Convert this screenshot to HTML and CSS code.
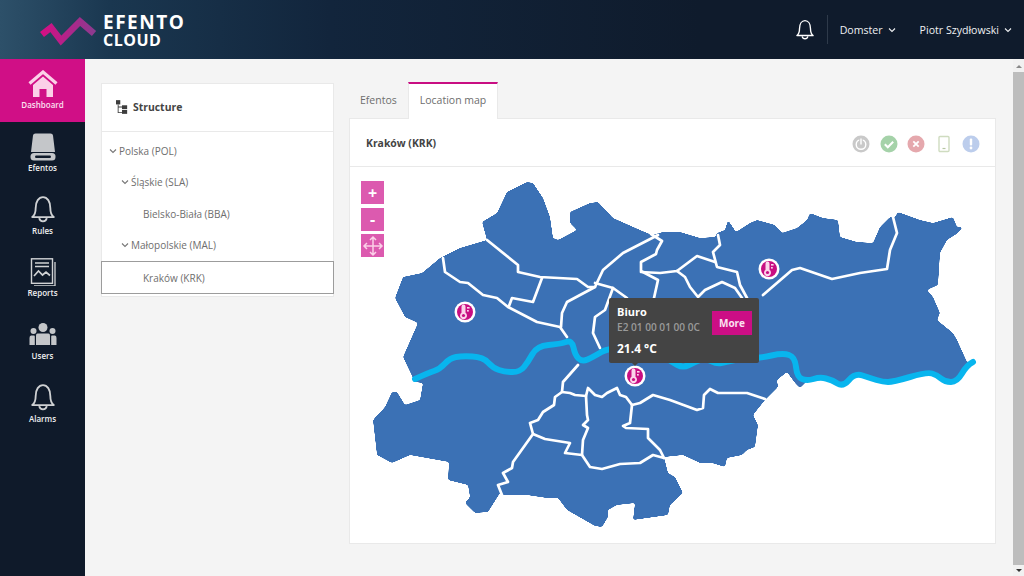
FILE: index.html
```html
<!DOCTYPE html>
<html lang="en">
<head>
<meta charset="utf-8">
<title>Efento Cloud</title>
<link rel="stylesheet" href="styles.css">
</head>
<body>
<svg class="defs" width="0" height="0">
  <defs>
    <filter id="soft" color-interpolation-filters="sRGB">
      <feGaussianBlur stdDeviation="1"/>
      <feColorMatrix values="1 0 0 0 0 0 1 0 0 0 0 0 1 0 0 0 0 0 10 -4.5"/>
    </filter>
  </defs>
  <symbol id="bell" viewBox="0 0 24 26">
    <path d="M2 20.500c2.600-2 3.200-4 3.200-8.500C5.200 6 8 2 12 2s6.800 4 6.800 10c0 4.500.6 6.500 3.200 8.500z" fill="none" stroke="currentColor" stroke-width="1.700" stroke-linejoin="round"/>
    <path d="M8.500 21.500c.4 2 1.800 3 3.500 3s3.100-1 3.500-3" fill="none" stroke="currentColor" stroke-width="1.700"/>
  </symbol>
  <symbol id="chev" viewBox="0 0 8 6">
    <path d="M1 1.500l3 3 3-3" fill="none" stroke="currentColor" stroke-width="1.100"/>
  </symbol>
  <symbol id="pin" viewBox="0 0 22 22">
    <circle cx="11" cy="11" r="10.500" fill="#fff"/>
    <circle cx="11" cy="11" r="8" fill="#c80e82"/>
    <path d="M7.500 5.500a2 2 0 0 1 4 0v6.300a3.500 3.500 0 1 1-4 0z" fill="#fbd4ea"/>
    <circle cx="9.500" cy="14.500" r="1.600" fill="#c80e82"/>
    <rect x="13" y="6" width="2.600" height="1.600" fill="#fbd4ea"/>
    <rect x="13" y="9" width="1.800" height="1.600" fill="#fbd4ea"/>
  </symbol>
</svg>

<header class="topbar">
  <div class="brand">
    <svg class="brand-mark" viewBox="0 0 60 30" width="60" height="30">
      <defs><linearGradient id="lg"><stop offset="0" stop-color="#d40f84"/><stop offset="1" stop-color="#8d3a8f"/></linearGradient></defs>
      <path d="M4 17.500l9-7 10 13 19-19 14 12" fill="none" stroke="url(#lg)" stroke-width="6.500" stroke-linejoin="miter"/>
    </svg>
    <div class="brand-text"><span class="brand-top">EFENTO</span><span class="brand-bottom">CLOUD</span></div>
  </div>
  <div class="top-actions">
    <svg class="top-bell" width="20" height="21"><use href="#bell"/></svg>
    <span class="top-divider"></span>
    <span class="top-menu first">Domster <svg class="chev" width="8" height="6"><use href="#chev"/></svg></span>
    <span class="top-menu">Piotr Szydłowski <svg class="chev" width="8" height="6"><use href="#chev"/></svg></span>
  </div>
</header>

<div class="main">
  <nav class="sidebar">
    <a class="nav-item active">
      <svg class="nav-icon" viewBox="0 0 30 28" width="30" height="28">
        <path d="M1.500 13.500L15 2l13.500 11.500" fill="none" stroke="#fbd0e8" stroke-width="3.200"/>
        <path d="M5 15L15 6.500 25 15v12h-6.500v-8h-7v8H5z" fill="#fbd0e8"/>
      </svg>
      <span>Dashboard</span>
    </a>
    <a class="nav-item">
      <svg class="nav-icon" viewBox="0 0 30 28" width="30" height="28">
        <path d="M5 2.500q.2-2 2.500-2h15q2.300 0 2.500 2L27 19H3z" fill="#c4c6c9"/>
        <rect x="2.500" y="20" width="25" height="7.500" rx="3.500" fill="#c4c6c9"/>
        <rect x="7" y="22.500" width="16" height="2.400" rx="1.200" fill="#0f1a2a"/>
      </svg>
      <span>Efentos</span>
    </a>
    <a class="nav-item">
      <svg class="nav-icon nav-line" width="28" height="28"><use href="#bell"/></svg>
      <span>Rules</span>
    </a>
    <a class="nav-item">
      <svg class="nav-icon" viewBox="0 0 30 28" width="30" height="28" fill="none" stroke="#d0d2d4">
        <path d="M27 4v24H6" stroke-width="1.300"/>
        <rect x="3.500" y=".8" width="21" height="24.500" stroke-width="1.400"/>
        <path d="M7 5h14M7 8.500h14" stroke-width="1.300"/>
        <path d="M6 18l4.500-5 4 4 3.500-3 4 3.500" stroke-width="1.700"/>
      </svg>
      <span>Reports</span>
    </a>
    <a class="nav-item">
      <svg class="nav-icon" viewBox="0 0 30 28" width="30" height="28" fill="#c4c6c9">
        <circle cx="15" cy="6.500" r="4.500"/>
        <circle cx="5.500" cy="10" r="3"/>
        <circle cx="24.500" cy="10" r="3"/>
        <path d="M9.500 12.500h11q1.500 0 1.500 2V24H8v-9.500q0-2 1.500-2z"/>
        <path d="M3 14.500h3q.8 0 .8 1V24H1.500v-7q0-2.500 1.500-2.500zM27 14.500h-3q-.8 0-.8 1V24h5.300v-7q0-2.500-1.500-2.500z"/>
      </svg>
      <span>Users</span>
    </a>
    <a class="nav-item">
      <svg class="nav-icon nav-line" width="28" height="28"><use href="#bell"/></svg>
      <span>Alarms</span>
    </a>
  </nav>

  <main class="content">
    <section class="card structure">
      <div class="card-head structure-head">
        <svg class="tree-icon" viewBox="0 0 14 18" width="12" height="16" fill="#3d3d3d">
          <rect x="0" y="1" width="5" height="5"/>
          <rect x="7" y="7" width="6" height="4.500"/>
          <rect x="7" y="12.500" width="6" height="4.500"/>
          <path d="M2 6h1v9h4v1H2zM3 8.500h4v1H3z"/>
        </svg>
        <h2>Structure</h2>
      </div>
      <ul class="tree">
        <li class="row lvl0"><svg class="chev" width="8" height="6"><use href="#chev"/></svg>Polska (POL)</li>
        <li class="row lvl1"><svg class="chev" width="8" height="6"><use href="#chev"/></svg>Śląskie (SLA)</li>
        <li class="row lvl2">Bielsko-Biała (BBA)</li>
        <li class="row lvl1"><svg class="chev" width="8" height="6"><use href="#chev"/></svg>Małopolskie (MAL)</li>
        <li class="row lvl2 selected">Kraków (KRK)</li>
      </ul>
    </section>

    <section class="right">
      <div class="tabs">
        <a class="tab">Efentos</a>
        <a class="tab tab-active">Location map</a>
      </div>
      <div class="card map-card">
        <div class="card-head map-head">
          <h2>Kraków (KRK)</h2>
          <div class="status">
            <svg width="18" height="18" viewBox="0 0 18 18">
              <circle cx="9" cy="9" r="8.500" fill="#c9c9c9"/>
              <circle cx="9" cy="9.500" r="4.800" fill="none" stroke="#fff" stroke-width="1.400"/>
              <path d="M9 3.500v6" stroke="#c9c9c9" stroke-width="3.500"/>
              <path d="M9 3.500v6" stroke="#fff" stroke-width="1.400"/>
            </svg>
            <svg width="18" height="18" viewBox="0 0 18 18">
              <circle cx="9" cy="9" r="8.500" fill="#a5d2a9"/>
              <path d="M4.800 9.300l3 3 5.400-5.600" fill="none" stroke="#fff" stroke-width="2"/>
            </svg>
            <svg width="18" height="18" viewBox="0 0 18 18">
              <circle cx="9" cy="9" r="8.500" fill="#e5a8ad"/>
              <path d="M6.300 6.300l5.400 5.400M11.700 6.300l-5.400 5.400" fill="none" stroke="#fff" stroke-width="1.800"/>
            </svg>
            <svg width="18" height="18" viewBox="0 0 18 18">
              <rect x="4" y="1.500" width="10" height="15" rx="1" fill="none" stroke="#cfdcc0" stroke-width="1.400"/>
              <path d="M7.500 13.500h3" stroke="#b7c6a3" stroke-width="1.200"/>
            </svg>
            <svg width="18" height="18" viewBox="0 0 18 18">
              <circle cx="9" cy="9" r="8.500" fill="#bccdec"/>
              <rect x="7.800" y="3.500" width="2.400" height="7" rx="1" fill="#fff"/>
              <circle cx="9" cy="13" r="1.400" fill="#fff"/>
            </svg>
          </div>
        </div>
        <div class="map">
          <svg class="map-svg" viewBox="350 167 645 376" width="645" height="376">
            <path class="land" d="M482 222L497 213 507 192 527 182 533 183 543 198 550 217 553 238 558 240 577 230 570 223 570 212 590 203 598 202 613 218 640 230 652 235 663 232 680 232 700 238 715 237 717 233 725 230 728 220 736 232 750 223 757 220 775 225 782 233 797 228 807 220 810 213 823 218 838 220 840 237 857 242 873 243 880 227 890 217 895 217 898 212 920 220 933 223 953 217 957 227 963 227 958 233 947 240 940 253 938 285 927 290 933 297 940 313 937 320 953 333 957 340 967 362 975 362 967 365 957 382 945 382 937 375 927 372 893 382 883 382 870 378 855 373 843 387 832 380 820 377 807 381 800 388 795 383 787 372 777 380 778 387 765 400 753 415 758 425 755 447 747 450 742 455 727 458 725 467 712 463 700 463 683 455 664 457 668 473 675 477 683 493 670 505 668 515 633 520 635 503 617 505 608 510 608 517 602 527 595 526 567 510 558 498 547 498 527 495 503 495 500 493 488 512 475 513 465 503 470 497 468 485 448 480 449 462 410 455 392 463 377 455 373 420 385 407 392 392 397 392 405 405 420 400 423 383 415 382 403 357 418 323 405 317 395 298 403 277 422 273 440 258 460 248 487 240z"/>
            <path class="border" d="M443 258L445 272 460 282 468 283 483 295 497 298 508 307 537 322 560 327 567 337"/>
            <path class="border" d="M487 240L518 265 518 272 540 277 577 279 588 287 595 287"/>
            <path class="border" d="M542 278L533 302 512 298 509 306"/>
            <path class="border" d="M658 235L623 253 603 270 595 287 567 302 562 313 561 327"/>
            <path class="border" d="M595 283L613 288 627 298"/>
            <path class="border" d="M613 288L605 310 595 317 593 333 600 348"/>
            <path class="border" d="M651 234L662 241 657 250 656 254 641 262 641 271 658 280 654 298"/>
            <path class="border" d="M641 272L660 273 677 271 697 256 715 262"/>
            <path class="border" d="M677 271L685 277 690 287 698 297 705 290 722 282 735 288 742 298"/>
            <path class="border" d="M718 235L720 245 713 252 717 267 737 272 740 285 747 298"/>
            <path class="border" d="M763 295L792 270 800 268 832 279 860 273 887 269 890 250 897 233 893 217"/>
            <path class="border" d="M578 365L563 382 562 392 570 393 575 395 586 396 588 388 595 395 602 397 607 393 617 388 620 395 626 397 632 405 640 403 653 395 670 400 697 410 703 408 704 395 710 389 718 393 747 393 765 399"/>
            <path class="border" d="M586 396L587 415 588 420 583 425 588 428 583 440 582 455"/>
            <path class="border" d="M562 392L555 397 554 405 543 412 538 420 530 423 533 434 513 462 512 468 503 473 508 482 498 485 502 495"/>
            <path class="border" d="M533 434L545 439 570 443 565 453 582 455 590 467 602 469 620 464 640 463 653 455 664 458"/>
            <path class="border" d="M632 405L630 423 623 426 626 428 648 429 648 438 660 450 664 458"/>
            <path class="river" d="M415 379Q428 373 434 371Q440 369 445 363.500Q450 358 456 357Q462 356 472.500 356.500Q483 357 488 362.500Q493 368 499 370Q505 372 512.500 372Q520 372 524 367Q528 362 532.500 354Q537 346 548.500 345Q560 344 566 342Q572 340 573.500 347.500Q575 355 578.500 358.500Q582 362 587.500 359.500Q593 357 601.500 352Q610 347 625 349.500Q640 352 650 353Q660 354 666 358Q672 362 677.500 365Q683 368 689 365Q695 362 700 360Q705 358 711 361Q717 364 721 363Q725 362 735 360Q745 358 752.500 358Q760 358 771.500 355.500Q783 353 789 355Q795 357 796 367Q797 377 802 379Q807 381 813.500 379Q820 377 826 378.500Q832 380 837.500 383.500Q843 387 849 380Q855 373 862.500 375.500Q870 378 876.500 380Q883 382 888 382Q893 382 910 377Q927 372 932 373.500Q937 375 941 378.500Q945 382 951 382Q957 382 962 373.500Q967 365 973 362"/>
            <use href="#pin" x="454" y="301" width="22" height="22"/>
            <use href="#pin" x="758" y="258" width="22" height="22"/>
            <use href="#pin" x="624" y="365" width="22" height="22"/>
          </svg>

          <div class="zoom">
            <button class="zoom-btn">+</button>
            <button class="zoom-btn">-</button>
            <button class="zoom-btn zoom-move">
              <svg viewBox="0 0 22 22" width="22" height="22" fill="none" stroke="#fbd0e8" stroke-width="1.500">
                <path d="M11 2v18M2 11h18M8 5l3-3 3 3M8 17l3 3 3-3M5 8l-3 3 3 3M17 8l3 3-3 3"/>
              </svg>
            </button>
          </div>

          <div class="tip">
            <div class="tip-top">
              <div>
                <div class="tip-name">Biuro</div>
                <div class="tip-id">E2 01 00 01 00 0C</div>
              </div>
              <button class="tip-more">More</button>
            </div>
            <div class="tip-value">21.4 °C</div>
          </div>
        </div>
      </div>
    </section>
  </main>

  <div class="scrollbar">
    <span class="arrow up"></span>
    <span class="thumb"></span>
    <span class="arrow down"></span>
  </div>
</div>
</body>
</html>
```
FILE: styles.css
```css
* { box-sizing: border-box; margin: 0; padding: 0; }
html, body { height: 100%; overflow: hidden; }
body {
  display: flex;
  flex-direction: column;
  font-family: "Open Sans", "Liberation Sans", sans-serif;
  background: #f4f4f4;
  color: #666;
}
.defs { position: absolute; }

.topbar {
  height: 59px;
  flex: none;
  display: flex;
  align-items: center;
  justify-content: space-between;
  background: linear-gradient(90deg, #2d5069 0, #1a3750 110px, #12253c 330px, #0f1b2c 700px);
  color: #fff;
}
.brand { display: flex; align-items: center; padding-left: 38px; }
.brand-mark { margin-top: 5px; }
.brand-text { display: flex; flex-direction: column; margin: 2px 0 0 5px; font-weight: 700; color: #fff; }
.brand-top { font-size: 19px; line-height: 19px; letter-spacing: 1.500px; }
.brand-bottom { font-size: 16px; line-height: 16px; letter-spacing: .5px; }

.top-actions { display: flex; align-items: center; padding-right: 12px; font-size: 10.600px; }
.top-bell { color: #fff; }
.top-divider { width: 1px; height: 29px; background: #2e3a4a; margin: 0 12px; }
.top-menu { display: flex; align-items: center; gap: 5px; color: #eef0f2; }
.top-menu.first { margin-right: 24px; }

.main { flex: 1; display: flex; min-height: 0; }

.sidebar { width: 85px; flex: none; background: #0f1a2a; }
.nav-item {
  height: 62.700px;
  display: flex;
  flex-direction: column;
  align-items: center;
  padding-top: 11px;
  font-size: 8px;
  font-weight: 600;
  line-height: 12px;
  color: #f0f0f0;
}
.nav-item.active { background: #d00f86; color: #fbe0f0; }
.nav-icon { display: block; margin-bottom: 1.200px; }
.nav-line { color: #cfd1d3; }

.content {
  flex: 1;
  display: flex;
  align-items: flex-start;
  gap: 15px;
  padding: 24px 17px 0 16px;
  min-width: 0;
}
.card { background: #fff; border: 1px solid #e9e9e9; }
.card-head { display: flex; align-items: center; height: 48px; border-bottom: 1px solid #e9e9e9; padding-bottom: 2px; }
.card-head h2 { font-size: 10.400px; font-weight: 700; color: #444; }

.structure { width: 233px; flex: none; height: 214px; }
.structure-head { padding-left: 14px; gap: 5px; }
.tree { list-style: none; padding-top: 3px; }
.row {
  height: 31.500px;
  display: flex;
  align-items: center;
  font-size: 10px;
  color: #6e6e6e;
}
.row .chev { margin-right: 2px; color: #777; }
.lvl0 { padding-left: 7px; }
.lvl1 { padding-left: 19px; }
.lvl2 { padding-left: 41px; }
.selected { height: 33px; margin: 0 -1px; padding-left: 41px; border: 1px solid #9c9c9c; background: #fff; }

.right { flex: 1; min-width: 0; }
.tabs { display: flex; height: 36px; margin-top: -1px; }
.tab { display: flex; align-items: center; padding: 0 11px 1px; font-size: 10.500px; color: #6e6e6e; }
.tab-active {
  background: #fff;
  border-top: 2px solid #c80e82;
  border-left: 1px solid #e9e9e9;
  border-right: 1px solid #e9e9e9;
  padding-bottom: 3px;
  position: relative;
  z-index: 1;
  margin-bottom: -1px;
}
.map-card { height: 426px; display: flex; flex-direction: column; }
.map-head { justify-content: space-between; padding: 0 15px 0 16px; flex: none; }
.status { display: flex; gap: 9.500px; margin-top: 2px; }
.status svg { display: block; }

.map { position: relative; flex: 1; overflow: hidden; }
.map-svg { display: block; }
.land { fill: #3b71b5; filter: url(#soft); }
.border { fill: none; stroke: #fff; stroke-width: 2.700; stroke-linejoin: round; stroke-linecap: round; }
.river { fill: none; stroke: #08b5ee; stroke-width: 6; stroke-linejoin: round; stroke-linecap: round; }

.zoom { position: absolute; left: 11px; top: 14px; display: flex; flex-direction: column; }
.zoom-btn {
  width: 23px;
  height: 23px;
  margin-bottom: 3.500px;
  border: 0;
  background: #dc5aaf;
  color: #fff;
  font-family: inherit;
  font-size: 16px;
  font-weight: 700;
  line-height: 22px;
  display: flex;
  align-items: center;
  justify-content: center;
}
.zoom-move { padding: 0; }

.tip {
  position: absolute;
  left: 259px;
  top: 131px;
  width: 150px;
  height: 65px;
  padding: 7px 7px 0 8px;
  background: #444;
  border-radius: 2px;
  color: #fff;
}
.tip::after {
  content: "";
  position: absolute;
  left: 23px;
  bottom: -3px;
  border: 3px solid transparent;
  border-bottom: 0;
  border-top-color: #444;
}
.tip-top { display: flex; justify-content: space-between; align-items: flex-start; }
.tip-name { font-size: 11px; font-weight: 700; line-height: 14px; }
.tip-id { font-size: 10.100px; font-weight: 600; line-height: 16px; color: #9a9a9a; white-space: nowrap; }
.tip-more {
  width: 40px;
  height: 24px;
  margin-top: 6px;
  border: 0;
  background: #cc0e85;
  color: #fbe0f0;
  font-family: inherit;
  font-size: 10px;
  font-weight: 700;
}
.tip-value { font-size: 12px; font-weight: 700; line-height: 16px; margin-top: 6px; }

.scrollbar {
  width: 11px;
  flex: none;
  display: flex;
  flex-direction: column;
  align-items: center;
  background: #f1f1f1;
  padding: 6px 0 4px;
}
.thumb { flex: 1; width: 100%; margin: 4px 0; background: #bdbdbd; }
.arrow { width: 0; height: 0; border: 3px solid transparent; }
.arrow.up { border-top: 0; border-bottom-color: #888; }
.arrow.down { border-bottom: 0; border-top-color: #333; }
```
